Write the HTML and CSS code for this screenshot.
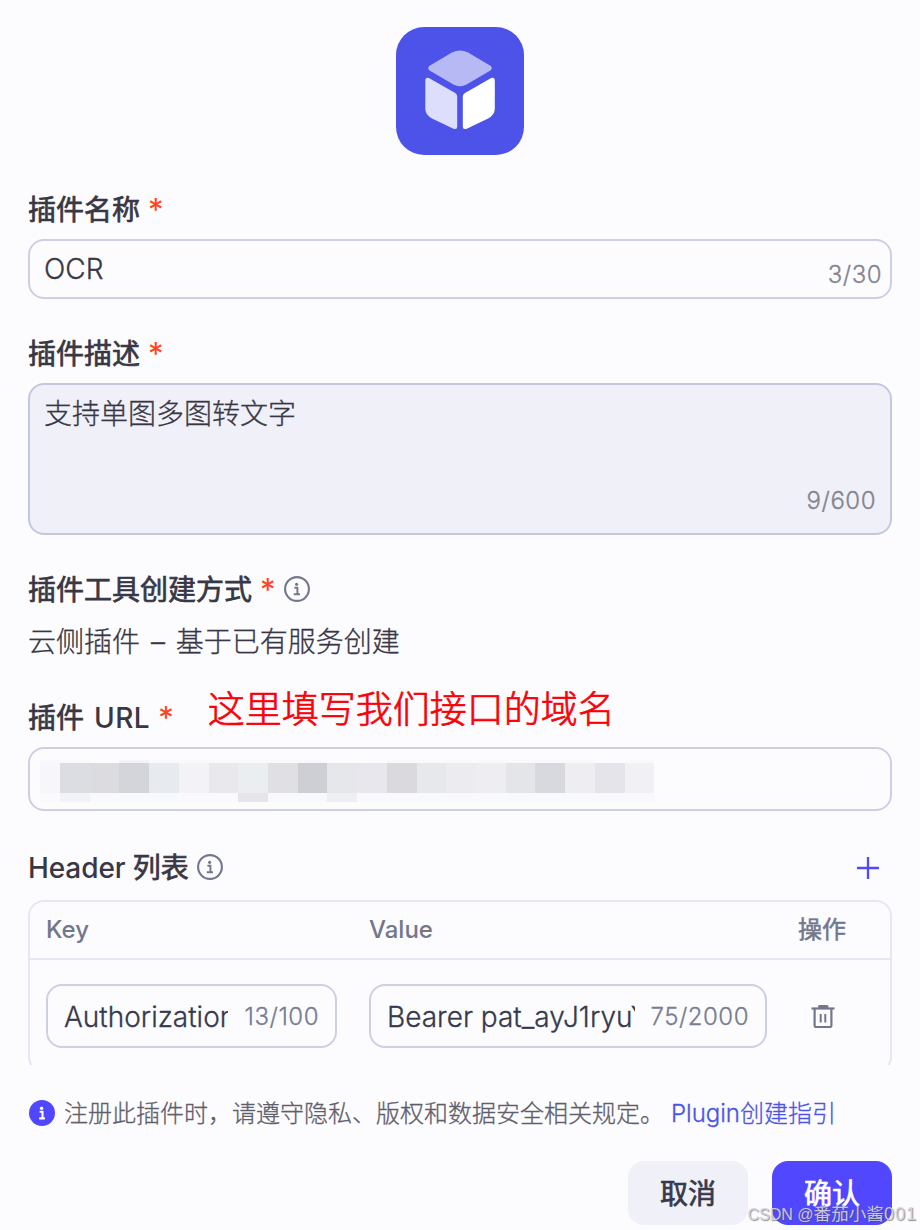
FILE: index.html
```html
<!DOCTYPE html>
<html lang="zh-CN">
<head>
<meta charset="utf-8">
<title>插件</title>
<link rel="stylesheet" href="styles.css">
</head>
<body>
<svg class="defs" width="0" height="0">
  <symbol id="info" viewBox="0 0 26 26">
    <circle cx="13" cy="13" r="11.9" fill="none" stroke="currentColor" stroke-width="2.100"/>
    <circle cx="12.6" cy="8.3" r="1.6" fill="currentColor"/>
    <path d="M10.400 11.800h3v6.100M9.800 18.200h6.200" fill="none" stroke="currentColor" stroke-width="1.9"/>
  </symbol>
</svg>
<main class="dialog">
  <div class="scroll">
    <div class="avatar">
      <svg width="128" height="128" viewBox="0 0 128 128">
        <path d="M56 25.5q8-4 16 0l22.400 13.300q2.800 2.200 0 4.600L71 57.200q-7 4-14 0L33.600 43.400q-2.800-2.400 0-4.600z" fill="#b7b9f5"/>
        <path d="M29.300 54q0-4.200 3.600-3l26.300 15q2 1.300 2 3.500v30q0 3.200-3.200 2.400L36.500 91.800q-7.200-3.500-7.200-10.500z" fill="#dddefb"/>
        <path d="M98.800 54q0-4.200-3.600-3L69 66q-2.200 1.300-2.200 3.500v30q0 3.200 3.400 2.400l21.400-10.100q7.200-3.500 7.200-10.500z" fill="#fff"/>
      </svg>
    </div>
    <div class="label">插件名称<span class="req">*</span></div>
    <div class="input name"><span>OCR</span><span class="count">3/30</span></div>
    <div class="label">插件描述<span class="req">*</span></div>
    <div class="input area"><span>支持单图多图转文字</span><span class="count">9/600</span></div>
    <div class="label">插件工具创建方式<span class="req">*</span><svg class="info" width="26" height="26"><use href="#info"/></svg></div>
    <div class="method">云侧插件 – 基于已有服务创建</div>
    <div class="label url-label">插件<span class="latin"> URL</span><span class="req">*</span><span class="note">这里填写我们接口的域名</span></div>
    <div class="input url">
      <svg width="614" height="42" viewBox="40 760 614 42" shape-rendering="crispEdges">
        <path d="M40 760h50v3H40zM387 760h30v3h-30zM417 760h178v3H417zM625 760h29v3h-29zM149 760h178v3H149z" fill="#f9f9fc"/>
        <path d="M119 760h30v3h-30z" fill="#f3f3f6"/>
        <path d="M40 763h20v30H40z" fill="#f7f7fb"/>
        <path d="M60 763h30v30H60z" fill="#dbdde2"/>
        <path d="M90 763h29v30H90z" fill="#dcdbe0"/>
        <path d="M119 763h30v30h-30z" fill="#d3d5da"/>
        <path d="M149 763h30v30h-30z" fill="#e7eaee"/>
        <path d="M179 763h30v30h-30z" fill="#f3f2f7"/>
        <path d="M209 763h29v30h-29z" fill="#e9e8ed"/>
        <path d="M238 763h30v30h-30z" fill="#ebeef1"/>
        <path d="M268 763h30v30h-30z" fill="#e0dfe4"/>
        <path d="M298 763h29v30h-29z" fill="#cecfd4"/>
        <path d="M327 763h30v30h-30z" fill="#e5e7eb"/>
        <path d="M357 763h30v30h-30z" fill="#e7e7ed"/>
        <path d="M387 763h30v30h-30z" fill="#d9d9de"/>
        <path d="M417 763h29v30h-29z" fill="#e6e8ec"/>
        <path d="M446 763h30v30h-30z" fill="#ecebf0"/>
        <path d="M476 763h30v30h-30z" fill="#eeedf2"/>
        <path d="M506 763h29v30h-29z" fill="#e3e5e9"/>
        <path d="M535 763h30v30h-30z" fill="#d7d9de"/>
        <path d="M565 763h30v30h-30z" fill="#eeedf2"/>
        <path d="M595 763h30v30h-30z" fill="#e4e4ea"/>
        <path d="M625 763h29v30h-29z" fill="#f1f0f5"/>
        <path d="M90 793h564v9H90z" fill="#f7f9fc"/>
        <path d="M40 793h20v9H40zM179 793h59v9h-59z" fill="#fafafd"/>
        <path d="M60 793h30v9H60z" fill="#f3f3f7"/>
        <path d="M238 793h30v9h-30z" fill="#e5e5eb"/>
        <path d="M327 793h30v9h-30z" fill="#efeff3"/>
      </svg>
    </div>
    <div class="label header-label"><span class="latin">Header </span>列表<svg class="info" width="26" height="26"><use href="#info"/></svg>
      <svg class="add" width="24" height="24" viewBox="0 0 24 24"><path d="M12 1v22M1 12h22" stroke="#5147ff" stroke-width="2.300"/></svg>
    </div>
    <div class="table">
      <div class="row head"><span>Key</span><span>Value</span><span class="op">操作</span></div>
      <div class="row">
        <div class="cell key"><span class="val">Authorization</span><span class="count">13/100</span></div>
        <div class="cell value"><span class="val">Bearer pat_ayJ1ryuY</span><span class="count">75/2000</span></div>
        <div class="op">
          <svg width="24" height="26" viewBox="0 0 24 26" fill="none" stroke="#72778c">
            <path d="M.5 5.500h23" stroke-width="2.200"/>
            <path d="M8.500 3.400h7.500" stroke-width="3" stroke-linecap="round"/>
            <path d="M3.600 5.500v17.300q0 1.200 1.200 1.200h14.400q1.200 0 1.200-1.200V5.500" stroke-width="2.200"/>
            <path d="M9.700 11v8.500M14.300 11v8.500" stroke-width="2"/>
          </svg>
        </div>
      </div>
    </div>
  </div>
  <div class="notice">
    <svg width="26" height="26" viewBox="0 0 26 26"><circle cx="13" cy="13" r="13" fill="#5147ff"/><circle cx="12.600" cy="8.300" r="1.700" fill="#fff"/><path d="M10.600 11.800h2.900v6.100M10.200 18.400h5.700" fill="none" stroke="#fff" stroke-width="2.100"/></svg>
    <span class="notice-text">注册此插件时，请遵守隐私、版权和数据安全相关规定。</span>
    <a class="link">Plugin创建指引</a>
  </div>
  <div class="actions">
    <div class="btn cancel">取消</div>
    <div class="btn ok">确认</div>
  </div>
  <div class="watermark"><span class="wm-site">CSDN @</span>番茄小酱<span class="wm-num">001</span></div>
</main>
</body>
</html>
```
FILE: styles.css
```css
* { box-sizing: border-box; }
body {
  margin: 0;
  background: #fcfcff;
  color: #383743;
  font: 300 28px/40px Inter, "Noto Sans CJK SC", sans-serif;
  -webkit-text-stroke: 0.3px currentColor;
}
svg { display: block; flex: none; }
.defs { position: absolute; }
.dialog {
  position: relative;
  width: 920px;
  height: 1230px;
  overflow: hidden;
  padding: 27px 28px 0;
}
.scroll { height: 1038px; overflow: hidden; }
.avatar {
  width: 128px;
  height: 128px;
  margin: 0 auto 34px;
  border-radius: 28px;
  background: #4d53e8;
}
.label {
  display: flex;
  align-items: center;
  height: 40px;
  margin-bottom: 10px;
  padding-top: 2px;
  white-space: pre;
  font-weight: 400;
  -webkit-text-stroke: 0.7px currentColor;
}
.latin {
  font-weight: 500;
  -webkit-text-stroke: 0;
}
.header-label .latin { letter-spacing: -0.1px; }
.req {
  margin-left: 8px;
  color: #ff441e;
  font-size: 31px;
  -webkit-text-stroke: 0;
}
.info { margin: -2px 0 0 8px; color: #72778c; }
.input {
  display: flex;
  justify-content: space-between;
  border: 2px solid #cdd0e2;
  border-radius: 16px;
}
.count {
  color: #85848e;
  font-size: 24px;
  letter-spacing: 0.5px;
}
.name {
  height: 60px;
  margin-bottom: 34px;
  padding: 8px 8px 7px 14px;
}
.name .count { padding-top: 6px; }
.area {
  height: 152px;
  margin-bottom: 34px;
  padding: 9px 14px 12px;
  border-color: #c3c8de;
  background: #f0f0f9;
}
.area .count { align-self: flex-end; }
.method {
  margin: 13px 0 35px;
  white-space: pre;
  word-spacing: 3px;
}
.url-label .latin { word-spacing: 2px; letter-spacing: 0.5px; }
.note {
  margin: -16px 0 0 34px;
  color: #fb0007;
  font-size: 37px;
  font-weight: 300;
  -webkit-text-stroke: 0.7px currentColor;
}
.url {
  height: 64px;
  margin-bottom: 36px;
  padding: 11px 10px;
}
.header-label { margin-bottom: 13px; }
.add { margin: 0 12px 0 auto; }
.table {
  height: 173px;
  border: 2px solid #e5e7f2;
  border-radius: 16px;
}
.row {
  display: grid;
  grid-template-columns: 291px 398px 1fr;
  column-gap: 32px;
  padding: 24px 16px;
}
.head {
  height: 58px;
  padding: 8px 16px;
  border-bottom: 2px solid #e5e7f2;
  color: #72778c;
  font-size: 24px;
  font-weight: 500;
  -webkit-text-stroke: 0;
}
.head .op {
  margin-left: -1px;
  font-weight: 400;
  -webkit-text-stroke: 0.5px currentColor;
}
.cell {
  display: flex;
  align-items: center;
  height: 64px;
  padding: 2px 16px 0;
  border: 2px solid #cdd0e2;
  border-radius: 16px;
}
.val {
  overflow: hidden;
  white-space: nowrap;
  color: #353a4b;
}
.key .val { width: 164px; }
.value .val { width: 248px; }
.cell .count { margin: -1px 0 0 auto; color: #787d91; }
div.op { align-self: center; padding-left: 12px; }
.notice {
  display: flex;
  align-items: center;
  height: 40px;
  margin-top: 28px;
  padding-left: 1px;
  color: #5f5e6b;
  font-size: 24px;
  white-space: nowrap;
}
.notice-text { margin-left: 9px; padding-top: 1px; }
.link { margin-left: 7px; padding-top: 1px; color: #4d53e8; }
.actions {
  display: flex;
  justify-content: flex-end;
  gap: 24px;
  margin-top: 28px;
}
.btn {
  width: 120px;
  height: 64px;
  border-radius: 16px;
  background: #f0f0f9;
  color: #353a4b;
  font-weight: 400;
  line-height: 66px;
  text-align: center;
  -webkit-text-stroke: 0.7px currentColor;
}
.ok { background: #5147ff; color: #fff; }
.watermark {
  position: absolute;
  right: 3px;
  bottom: 2px;
  color: rgba(215, 215, 222, 0.9);
  font: 17.6px/26px "Liberation Sans", "Noto Sans CJK SC", sans-serif;
  -webkit-text-stroke: 0;
  text-shadow: 1px 1px 1px rgba(80, 80, 90, 0.65);
  white-space: nowrap;
}
.wm-site { font-size: 16px; }
.wm-num { font-size: 18px; letter-spacing: 1px; }
```
